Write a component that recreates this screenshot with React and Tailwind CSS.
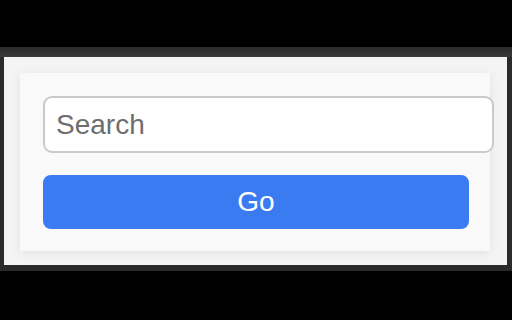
export default function App() {
  return (
    <div className="w-[512px] h-[320px] bg-black flex flex-col overflow-hidden font-['Liberation_Sans',Arial,sans-serif]">
      <div className="h-[47px] bg-black" />
      <div className="h-[10px] bg-gradient-to-b from-[#2a2a2a] to-[#3a3a3a]" />
      <div className="flex h-[208px]">
        <div className="w-[4px] bg-[#2b2b2b]" />
        <div className="flex-1 bg-[#f4f4f4] pl-[16px] pt-[16px]">
          <div className="w-[470px] h-[178px] bg-[#f9f9f9] shadow-[0_2px_10px_rgba(0,0,0,0.08)] pl-[23px] pt-[23px] flex flex-col gap-[22px]">
            <input
              type="text"
              placeholder="Search"
              className="w-[451px] h-[57px] shrink-0 bg-white border-2 border-[#cacaca] rounded-[9px] px-[11px] text-[28px] text-[#333] placeholder:text-[#6e6e6e] outline-none"
            />
            <button className="w-[426px] h-[54px] bg-[#3a7bf1] rounded-[8px] text-white text-[28px] flex items-center justify-center">
              Go
            </button>
          </div>
        </div>
        <div className="w-[5px] bg-[#2b2b2b]" />
      </div>
      <div className="h-[6px] bg-[#2a2a2a]" />
      <div className="flex-1 bg-black" />
    </div>
  );
}
